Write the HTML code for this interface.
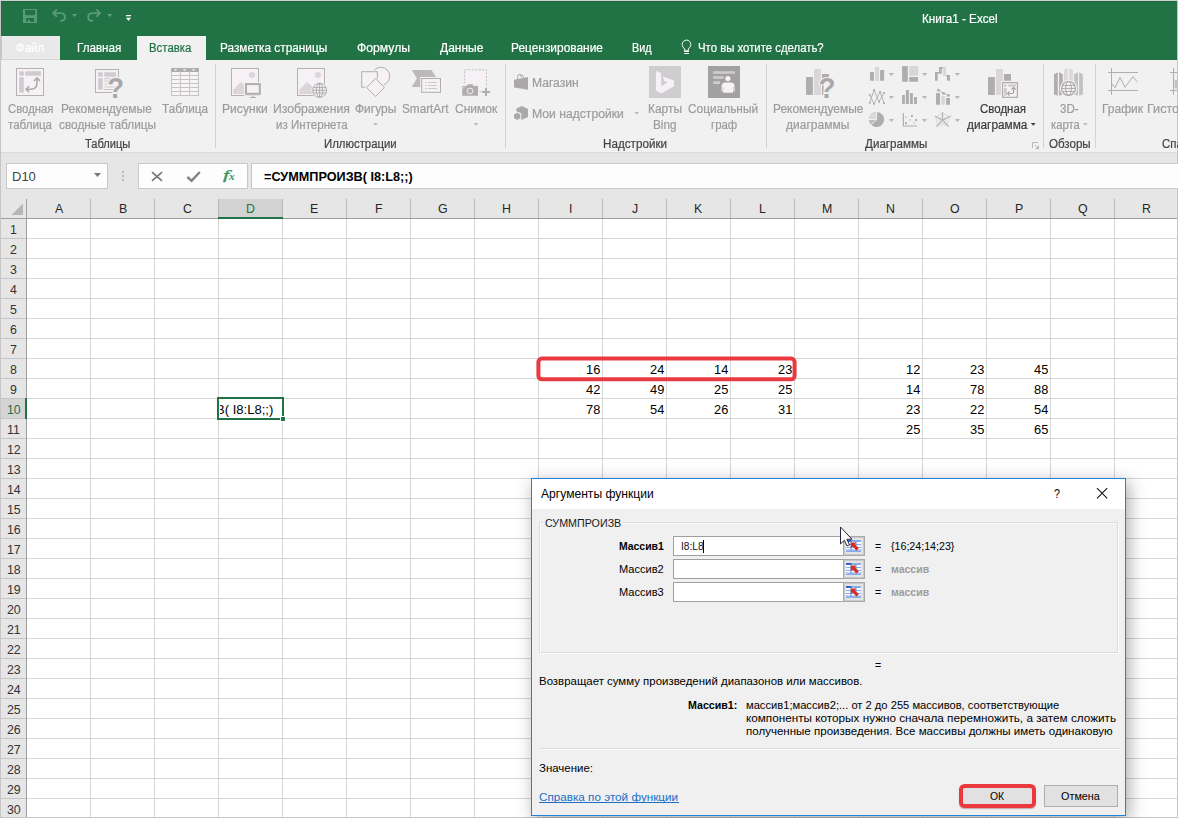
<!DOCTYPE html>
<html lang="ru">
<head>
<meta charset="utf-8">
<title>Книга1 - Excel</title>
<style>
*{box-sizing:border-box;margin:0;padding:0}
html,body{width:1178px;height:818px;overflow:hidden;background:#fff}
body{position:relative;font-family:"Liberation Sans",sans-serif;font-size:12px;color:#444}
.a{position:absolute}
.t{position:absolute;white-space:pre;line-height:1;transform-origin:0 0;display:block}
#win{position:absolute;left:0;top:0;width:1178px;height:818px;background:#c8c5c6;overflow:hidden}
#title{left:1px;top:1px;width:1176px;height:59px;background:#217346;box-shadow:inset 0 1px 0 #1c6b3f}
#filetab{left:1px;top:36px;width:59px;height:24px;background:#e9e9e9;border-left:1px solid #c9c9c9;border-bottom:1px solid #d4d4d4}
#acttab{left:137px;top:36px;width:69px;height:24px;background:#f1f1f1}
#ribbon{left:1px;top:60px;width:1176px;height:92px;background:#f1f1f1}
#ribline{left:1px;top:152px;width:1176px;height:1px;background:#dadada}
#band{left:1px;top:153px;width:1176px;height:66px;background:#e6e6e6}
.sep{position:absolute;top:64px;width:1px;height:84px;background:#d2d2d2}
.box{position:absolute;top:163px;height:26px;background:#fdfdfd;border:1px solid #c9c9c9}
#sheet{left:1px;top:219px;width:1176px;height:598px;background:#fff;
 background-image:linear-gradient(to right,#d6d6d6 1px,transparent 1px),linear-gradient(to bottom,#d6d6d6 1px,transparent 1px);
 background-size:64px 20px,64px 20px;background-position:25px 0,0 19px}
#rowhdr{left:1px;top:219px;width:25px;height:598px;background:#e6e6e6;
 background-image:linear-gradient(to bottom,#c4c4c4 1px,transparent 1px);background-size:25px 20px;background-position:0 19px}
#rowline{left:26px;top:199px;width:1px;height:618px;background:#9e9e9e}
#colline{left:1px;top:218px;width:1176px;height:1px;background:#9e9e9e}
#colhdr{left:27px;top:199px;width:1150px;height:19px;
 background-image:linear-gradient(to right,#b8b8b8 1px,transparent 1px);background-size:64px 19px;background-position:63px 0}
#selcol{left:219px;top:199px;width:63px;height:19px;background:#d2d2d2}
#gcol{left:218px;top:217px;width:65px;height:2px;background:#217346}
#selrow{left:1px;top:399px;width:25px;height:19px;background:#d4d4d4}
#grow{left:25px;top:398px;width:2px;height:21px;background:#217346}

#dshadow{left:527px;top:476px;width:608px;height:342px;box-shadow:0 0 0 0 transparent;background:transparent}
#dlg{left:531px;top:478px;width:595px;height:338px;background:#f0f0f0;border:1px solid #1f83dc;box-shadow:3px 4px 16px 0 rgba(0,0,0,.34)}
#din{left:0;top:1px;width:593px;height:335px}
#dlg .a{position:absolute}
#dtitle{left:0;top:-1px;width:593px;height:30px;background:#fff}
#dgroup{left:7px;top:42px;width:579px;height:131px;border:1px solid #dcdcdc;box-shadow:inset 1px 1px 0 #fbfbfb,1px 1px 0 #fbfbfb}
#dgcap{left:11px;top:36px;width:79px;height:14px;background:#f0f0f0}
.din{left:141px;width:172px;height:20px;background:#fff;border:1px solid #a0a0a0;border-right:none}
.dbtn{left:311px;width:22px;height:20px;background:#e4e4e4;border:1px solid #a9a9a9;box-shadow:inset 0 0 0 1px #c9c9c9}
#caret{left:171px;top:60px;width:1px;height:13px;background:#000}
#dsep{left:7px;top:268px;width:581px;height:1px;background:#dadada;box-shadow:0 1px 0 #fafafa}
#okred{left:427.2px;top:303.9px;width:76.4px;height:24.6px;border:4px solid #ea3a40;border-radius:5.5px;box-shadow:0 1px 1px rgba(120,40,40,.35)}
.pbtn{top:305px;height:22px;background:#e1e1e1;border:1px solid #adadad}
#lnk{left:7px;top:322px;width:140px;height:1px;background:#1a6fc4}
.gl{left:0;top:0;width:1178px;height:160px;will-change:transform}
#topb{left:0;top:0;width:1178px;height:1px;background:#d5d0d2}
</style>
</head>
<body>
<div id="win">
<div class="a" id="topb"></div>
<div class="a" id="title"></div>
<div class="a" id="filetab"></div>
<div class="a" id="acttab"></div>
<div class="a" id="ribbon"></div>
<div class="a" id="ribline"></div>
<div class="a" id="band"></div>
<div class="sep" style="left:215px"></div>
<div class="sep" style="left:505px"></div>
<div class="sep" style="left:766px"></div>
<div class="sep" style="left:1043px"></div>
<div class="sep" style="left:1095px"></div>
<div class="box" style="left:6px;width:102px"></div>
<div class="box" style="left:138px;width:110px"></div>
<div class="box" style="left:251px;width:930px"></div>
<div class="a" id="sheet"></div>
<div class="a" id="rowhdr"></div>
<div class="a" id="colhdr"></div>
<div class="a" id="selcol"></div>
<div class="a" id="selrow"></div>
<div class="a" id="rowline"></div>
<div class="a" id="colline"></div>
<div class="a" id="gcol"></div>
<div class="a" id="grow"></div>
<svg class="a" style="left:0;top:0" width="1178" height="818" viewBox="0 0 1178 818">
<!-- QAT -->
<path fill-rule="evenodd" fill="#599a78" d="M23 9h14v14h-14z M25 10.1h10.2v4.2l-1 1h-8.2l-1-1z M26.2 18h8v3.8h-4.2v-1.8h-2v1.8h-1.8z"/>
<g fill="none" stroke="#599a78" stroke-width="1.9" stroke-linejoin="miter">
 <path d="M57 9.4 L53.2 13.1 L57 16.8"/>
 <path d="M53.6 13.1 H60.4 C63.6 13.1 65 15 65 17.2 C65 19.4 63.4 20.9 60.2 20.9"/>
 <path d="M96.2 9.4 L100 13.1 L96.2 16.8"/>
 <path d="M99.6 13.1 H92.8 C89.6 13.1 88.2 15 88.2 17.2 C88.2 19.4 89.8 20.9 93 20.9"/>
</g>
<path d="M72 14h5l-2.5 3z M107.2 14h5l-2.5 3z" fill="#5f9f7e"/>
<path d="M126 15h5v1.2h-5z M126 17.8h5l-2.5 3.2z" fill="#fff"/>
<!-- bulb -->
<g fill="none" stroke="#fff" stroke-width="1">
 <path d="M684.7 50.6 V49 C683 47.3 682.2 46.3 682.2 44.4 A4.3 4.3 0 0 1 690.8 44.4 C690.8 46.3 690 47.3 688.3 49 V50.6"/>
</g>
<path d="M684.2 50.3h4.7v1.6h-4.7z M684.2 53.1h4.7v1h-4.7z" fill="#fff"/>
<!-- formula bar icons -->
<path d="M94 173h7l-3.5 4z" fill="#777"/>
<g fill="#bdbdbd"><rect x="122" y="171" width="2" height="2"/><rect x="122" y="175" width="2" height="2"/><rect x="122" y="179" width="2" height="2"/></g>
<path d="M152 172.2 L162 180.8 M162 172.2 L152 180.8" stroke="#777" stroke-width="1.7" fill="none"/>
<path d="M187.4 177 L191.6 180.8 L199.8 172" stroke="#828282" stroke-width="2.4" fill="none"/>
<!-- select all triangle -->
<path d="M23 203.5 V215 H11.5 Z" fill="#b7b7b7"/>
<!-- active cell -->
<rect x="218" y="398" width="65" height="21" fill="none" stroke="#217346" stroke-width="2"/>
<rect x="280.5" y="416.5" width="5" height="5" fill="#217346" stroke="#fff" stroke-width="1"/>
<!-- red highlight around I8:L8 -->
<rect x="538.4" y="358.6" width="256.2" height="20.7" rx="3.5" fill="none" stroke="#ea3a40" stroke-width="4"/>
<!-- ribbon dropdown arrows -->
<g fill="#bdbdbd">
 <path d="M373 123h5l-2.5 2.7z M473.5 123h5l-2.5 2.7z M634.2 112h5l-2.5 2.7z M1082.8 123h5l-2.5 2.7z"/>
</g>
<path d="M1030.7 123h5l-2.5 2.7z" fill="#444"/>
</svg>
<svg class="a" style="left:0;top:0" width="1178" height="818" viewBox="0 0 1178 818">
<!-- PivotTable -->
<rect x="16.5" y="68.5" width="27" height="27" fill="#f6f1f5" stroke="#b5b1b3"/>
<path d="M19.2 71.2h4.6v4.6h-4.6z M25.3 71.2h15.6v4.6h-15.6z M19.2 77.3h4.6v15.5h-4.6z" fill="#cfcbce"/>
<g fill="none" stroke="#aaa7a9" stroke-width="1.5">
 <path d="M26.2 89.3 H31 C35.5 89.3 37 86 37 82.5 V78"/>
 <path d="M29.2 86.3 L26 89.3 L29.2 92.3"/>
 <path d="M34 81 L37 77.8 L40 81"/>
</g>
<!-- Recommended PivotTables -->
<rect x="95.5" y="69.5" width="23" height="23" fill="#f6f1f5" stroke="#b5b1b3"/>
<path d="M98.1 72.2h4.6v4.6h-4.6z M104.2 72.2h11.7v4.6h-11.7z M98.1 78.3h4.6v11.4h-4.6z" fill="#cfcbce"/>
<path d="M104.2 78.2h11.7v1h-11.7z M104.2 89h11.7v1h-11.7z" fill="#c4c1c3"/>
<path d="M104.2 80.3h6v1.6h-6z M104.2 83.2h6v1.6h-6z M104.2 86.1h11.7v1.6h-11.7z" fill="#ddd9dc"/>
<rect x="117.6" y="79" width="2.4" height="14.6" fill="#f1f1f1"/>
<text x="107.2" y="97.8" font-family="Liberation Sans, sans-serif" font-weight="bold" font-size="29.5" fill="#aaa7a9" stroke="#f1f1f1" stroke-width="2.2" paint-order="stroke" textLength="16.8" lengthAdjust="spacingAndGlyphs">?</text>
<!-- Table -->
<rect x="171" y="68" width="28" height="28" fill="#c6c3c5"/>
<rect x="171" y="68" width="28" height="4" fill="#b0adaf"/>
<path d="M172 72h8v3h-8z M181 72h8v3h-8z M190 72h8v3h-8z M172 76h8v3h-8z M181 76h8v3h-8z M190 76h8v3h-8z M172 80h8v3h-8z M181 80h8v3h-8z M190 80h8v3h-8z M172 84h8v3h-8z M181 84h8v3h-8z M190 84h8v3h-8z M172 88h8v3h-8z M181 88h8v3h-8z M190 88h8v3h-8z M172 92h8v3h-8z M181 92h8v3h-8z M190 92h8v3h-8z" fill="#f8f3f7"/>
<path d="M173.8 69.3h3.4l-1.7 1.8z M182.8 69.3h3.4l-1.7 1.8z M191.8 69.3h3.4l-1.7 1.8z" fill="#f8f3f7"/>
<!-- Pictures -->
<rect x="231.5" y="68.5" width="27" height="27" fill="#f6f1f5" stroke="#b5b1b3"/>
<circle cx="252" cy="75" r="3" fill="#dcd6da"/>
<path d="M233.3 94 V89.8 L240 82.8 Q241 82 242 82.8 L246 86.5 V94 Z" fill="#dcd6da"/>
<rect x="244" y="82.2" width="18" height="13.6" fill="#f1f1f1"/>
<rect x="246" y="84.1" width="13.8" height="9.7" fill="#f6f1f5" stroke="#b0adaf" stroke-width="2"/>
<path d="M252.4 95.6h1.2v1.4h-1.2z M250 97h5.8v1h-5.8z" fill="#b0adaf"/>
<!-- Online pictures -->
<rect x="297.5" y="68.5" width="27" height="27" fill="#f6f1f5" stroke="#b5b1b3"/>
<circle cx="318" cy="75" r="3" fill="#dcd6da"/>
<path d="M299.2 94 V89.8 L306 82.8 Q307 82 308 82.8 L313 87.5 V94 Z" fill="#dcd6da"/>
<circle cx="319.6" cy="90.3" r="8.2" fill="#f1f1f1"/>
<g fill="#f6f1f5" stroke="#b0adaf" stroke-width="1">
 <circle cx="319.6" cy="90.3" r="7"/>
 <ellipse cx="319.6" cy="90.3" rx="3.2" ry="7" fill="none"/>
 <path d="M319.6 83.3v14 M313.2 87.6h12.8 M312.6 90.3h14 M313.2 93h12.8" fill="none"/>
</g>
<!-- Shapes -->
<path d="M376 69.2 A9 9 0 1 1 384.6 84.5" fill="#f6f1f5" stroke="none"/>
<circle cx="380.8" cy="76.3" r="9" fill="#f6f1f5" stroke="#b0adaf"/>
<rect x="360.2" y="70.2" width="18.6" height="18.4" fill="#f1f1f1"/>
<rect x="361.7" y="71.7" width="15.6" height="15.5" fill="#f6f1f5" stroke="#b0adaf"/>
<path d="M375.5 76.7 L386.3 87.5 L375.5 98.3 L364.7 87.5 Z" fill="#f1f1f1"/>
<path d="M375.5 78.6 L384.4 87.5 L375.5 96.4 L366.6 87.5 Z" fill="#f6f1f5" stroke="#b0adaf"/>
<!-- SmartArt -->
<path d="M411.7 70 H431.5 L437 78.5 L431.5 87 H411.7 L416.9 78.5 Z" fill="#bcb9bb"/>
<rect x="420.2" y="77" width="21.8" height="16.8" fill="#f1f1f1"/>
<rect x="421.7" y="78.5" width="18.8" height="13.8" fill="#f6f1f5" stroke="#b0adaf"/>
<path d="M425 82h1.8v1h-1.8z M428 82h8.8v1h-8.8z M425 85h1.8v1h-1.8z M428 85h8.8v1h-8.8z M425 88h1.8v1h-1.8z M428 88h8.8v1h-8.8z" fill="#cbc8ca"/>
<!-- Screenshot -->
<rect x="464.7" y="69.8" width="21.8" height="17.5" fill="#f6f1f5"/>
<path d="M464.7 87.3 V69.8 H486.5 V87.3" fill="none" stroke="#c2bfc1" stroke-dasharray="2.2 1.3"/>
<rect x="461.4" y="83.4" width="17.6" height="13" fill="#f1f1f1"/>
<path d="M462.2 86h4.6l.9-1.8h4.8l.9 1.8h4.6v9.8h-15.8z" fill="#b0adaf"/>
<circle cx="470" cy="91" r="2.9" fill="#b0adaf" stroke="#f3eef2" stroke-width="1"/>
<rect x="463.2" y="87.1" width="1.2" height="1.2" fill="#f6f1f5"/>
<path d="M485 88h2v3h3v2h-3v3h-2v-3h-3v-2h3z" fill="#b0adaf"/>
<path d="M479.6 91.5h1.6" stroke="#c2bfc1" fill="none"/>
<!-- Store -->
<path d="M514 79.8 L528 77 V89.7 L514 87.6 Z" fill="#aba8aa"/>
<path d="M517.6 79 V76.6 Q517.6 74.4 519.6 74.4 Q521.4 74.4 521.4 76.4 V77.6 M519.8 76 Q520.6 74.6 522 75 Q523.6 75.4 523.6 77.6" fill="none" stroke="#aba8aa" stroke-width="1"/>
<!-- My add-ins -->
<path d="M522 106 L528 109 V117 L521.3 120 V113.3 L516.4 111.3 V108.6 Z" fill="#aba8aa"/>
<path d="M517.2 112.8 L520.3 114.6 V118.2 L517.2 120 L514.1 118.2 V114.6 Z" fill="#aba8aa"/>
<!-- Bing -->
<rect x="649" y="66" width="32" height="32" fill="#cfcdcf"/>
<path d="M656 71 L661.1 72.8 V86.3 L667.6 82.6 L664.4 81.1 L662.6 76.4 L674 80.5 V86.2 L661.1 93.6 L656 90.6 Z" fill="#f6f1f5"/>
<!-- Social graph -->
<rect x="708" y="66" width="32" height="32" fill="#a3a0a2"/>
<path d="M713.1 71.2h21.9v2.5h-21.9z M713.1 76.3h10.6v2.5h-10.6z M713.1 81.3h6.9v2.6h-6.9z" fill="#cfcdcf" />
<circle cx="727.9" cy="78.5" r="2.6" fill="#f6f1f5"/>
<path d="M721.6 91.5 V86.5 Q721.6 82.6 725.5 82.6 H730.6 Q734.6 82.6 734.6 86.5 V91.5 H733.4 V87 H733 V92.8 H723.2 V87 H722.8 V91.5 Z" fill="#f6f1f5"/>
<!-- Recommended charts -->
<path d="M806 77h6.9v17.9h-6.9z" fill="#b0adaf"/>
<path d="M814.1 69h6.8v25.9h-6.8z" fill="#d9d5d8"/>
<path d="M822 74.1h6.9v6h-6.9z M822 84h1.6v10.9h-1.6z" fill="#b0adaf"/>
<text x="818.6" y="97.8" font-family="Liberation Sans, sans-serif" font-weight="bold" font-size="29.5" fill="#aaa7a9" stroke="#f1f1f1" stroke-width="2.2" paint-order="stroke" textLength="17" lengthAdjust="spacingAndGlyphs">?</text>
<!-- small charts row1 -->
<path d="M870 72h4v8.8h-4z M880.1 70h4v10.8h-4z" fill="#b0adaf"/>
<path d="M875.1 67h3.9v13.8h-3.9z" fill="#d9d5d8"/>
<path d="M902.1 66h5.7v15.8h-5.7z M909.2 77.1h8.9v4.7h-8.9z" fill="#b0adaf"/>
<path d="M909.2 66h8.9v9.7h-8.9z" fill="#d9d5d8"/>
<path d="M935 72.1h2.7v8.7h-2.7z M935 72.1h6.8v1.6h-6.8z M939.1 67.1h2.7v6.6h-2.7z M939.1 67.1h4v1.5h-4z M946 75h4v1.6h-4z M947 75h3v5.8h-3z" fill="#b0adaf"/>
<path d="M943.1 67.1h2.9v8.6h-2.9z" fill="#d9d5d8"/>
<!-- small charts row2 -->
<g fill="none" stroke="#b0adaf" stroke-width="0.9">
 <path d="M869.8 94.9 L874 103.9 L880 91.9 L884.1 103"/>
 <path d="M869.8 102.9 L874 89.8 L879 101.8 L884.1 92.8"/>
</g>
<path d="M868.9 94h1.8v1.8h-1.8z M873.1 103h1.8v1.8h-1.8z M879.1 91h1.8v1.8h-1.8z M883.2 102.1h1.8v1.8h-1.8z M868.9 102h1.8v1.8h-1.8z M873.1 88.9h1.8v1.8h-1.8z M878.1 100.9h1.8v1.8h-1.8z M883.2 91.9h1.8v1.8h-1.8z" fill="#b0adaf"/>
<path d="M902.1 95.1h2.8v8.8h-2.8z M905.9 90h3v13.9h-3z M910 93h2.9v10.9h-2.9z M914 97h3v6.9h-3z" fill="#b0adaf"/>
<path d="M936 93h4v11.8h-4z M946.1 97.9h3.9v6.9h-3.9z" fill="#b0adaf"/>
<path d="M941.2 96h3.6v8.8h-3.6z" fill="#d9d5d8"/>
<path d="M938.4 90.2 L943.6 93.4 L948.5 95.4" fill="none" stroke="#b0adaf" stroke-width="0.9"/>
<circle cx="938.4" cy="90.2" r="1.4" fill="#b0adaf"/><circle cx="943.6" cy="93.4" r="1.4" fill="#b0adaf"/><circle cx="948.5" cy="95.4" r="1.4" fill="#b0adaf"/>
<!-- small charts row3 -->
<circle cx="876.6" cy="119.5" r="7.6" fill="#b0adaf"/>
<path d="M876.6 119.5 V111.9 A7.6 7.6 0 0 0 869 119.5 Z" fill="#dcd8db"/>
<path d="M876.6 119.5 H869 A7.6 7.6 0 0 0 871.2 124.9 Z" fill="#bebbbd"/>
<path d="M876.6 111.9 V119.5 H869 M876.6 119.5 L871.2 124.9" fill="none" stroke="#f1f1f1" stroke-width="1"/>
<path d="M903.4 113.1 V126 H917" fill="none" stroke="#b0adaf" stroke-width="1.2"/>
<path d="M911 115h1.9v1.9h-1.9z M915.1 119.1h1.9v1.9h-1.9z M905 122h1.9v1.9h-1.9z" fill="#b0adaf"/>
<path d="M905 116h1.9v1.9h-1.9z M909.1 119.1h1.9v1.9h-1.9z M913.1 122h1.9v1.9h-1.9z" fill="#dcd6da"/>
<g fill="none" stroke="#d9d5d8" stroke-width="0.9">
 <path d="M942.5 113.4 L949.2 117 L947.4 125 H937.6 L935.8 117 Z"/>
 <path d="M942.5 116.6 L946 118.6 L945 123 H940 L939 118.6 Z"/>
</g>
<path d="M942.5 120.2 V112 M942.5 120.2 L950.8 116.1 M942.5 120.2 L948.7 126.6 M942.5 120.2 L936.3 126.6 M942.5 120.2 L935 116.1" fill="none" stroke="#b4b1b3" stroke-width="1.1"/>
<g fill="#b9b6b8">
 <path d="M888.8 73h5.2l-2.6 2.9z M921.9 73h5.2l-2.6 2.9z M954.8 73h5.2l-2.6 2.9z"/>
 <path d="M888.8 96h5.2l-2.6 2.9z M921.9 96h5.2l-2.6 2.9z M954.8 96h5.2l-2.6 2.9z"/>
 <path d="M888.8 119h5.2l-2.6 2.9z M921.9 119h5.2l-2.6 2.9z M954.8 119h5.2l-2.6 2.9z"/>
</g>
<!-- Pivot chart -->
<path d="M988 77h6.9v17.9h-6.9z M1004 74.1h7v6.7h-7z" fill="#b0adaf"/>
<path d="M996 69h6.9v25.9h-6.9z" fill="#d9d5d8"/>
<rect x="1001" y="81" width="18" height="18" fill="#f1f1f1"/>
<rect x="1002.6" y="82.6" width="14.8" height="14.7" fill="#f8f3f7" stroke="#adaaac" stroke-width="1.2"/>
<path d="M1004 84.2h2.8v2.5h-2.8z M1008.2 84.2h7.7v2.5h-7.7z M1004 88.1h2.8v7.6h-2.8z" fill="#cfcbce"/>
<g fill="none" stroke="#a5a2a4" stroke-width="1.2">
 <path d="M1007.6 93.5 H1012.4 Q1013.6 93.5 1013.6 92.3 V87.6"/>
 <path d="M1009.6 91.4 L1007.5 93.5 L1009.6 95.6 M1011.4 89.6 L1013.6 87.4 L1015.8 89.6"/>
</g>
<!-- 3D map -->
<path d="M1054 74.2 L1057.8 72.2 V95.7 L1054 94.6 Z M1059.1 72.2 L1062.8 74.2 V94.6 L1059.1 95.7 Z" fill="#b0adaf"/>
<path d="M1064 70.2 L1067.8 68.1 V90 H1064 Z M1069.1 68.1 L1072.9 70.2 V90 H1069.1 Z" fill="#dcd8db"/>
<path d="M1074.1 74.2 L1078 72.2 V95.7 L1074.1 94.6 Z M1079.1 72.2 L1082.9 74.2 V94.6 L1079.1 95.7 Z" fill="#c4c1c3"/>
<circle cx="1068.5" cy="88.4" r="8.6" fill="#f1f1f1"/>
<g fill="#f8f3f7" stroke="#a9a6a8" stroke-width="1.2">
 <circle cx="1068.5" cy="88.4" r="6.9"/>
 <ellipse cx="1068.5" cy="88.4" rx="2.8" ry="6.9" fill="none" stroke-width="1"/>
 <path d="M1061.6 88.4h13.8 M1062.6 85.4h11.8 M1062.6 91.4h11.8" fill="none" stroke-width="1"/>
</g>
<!-- Sparkline line -->
<g fill="none" stroke="#b0adaf" stroke-width="1">
 <path d="M1111.5 68 V94.8 M1108 72.5 H1138 M1108 90.5 H1138"/>
 <path d="M1112 83.8 L1115 87.6 L1120 77.4 L1125 87.2 L1133 76.6 L1137 81.8"/>
 <path d="M1173.5 68 V94.8 M1170 72.5 H1177 M1170 90.5 H1177"/>
</g>
<path d="M1174.6 80h2.4v8.5h-2.4z" fill="#c4c1c3"/>
<!-- dialog launcher -->
<path d="M1032.5 148 V142.5 H1038" fill="none" stroke="#b9b9b9" stroke-width="1"/>
<path d="M1035 145 L1038.5 148.5 M1038.5 145.6 V148.5 H1035.6" fill="none" stroke="#b0b0b0" stroke-width="1"/>
</svg>

<div class="a" id="dshadow"></div>
<div class="a" id="dlg"><div class="a" id="din">
 <div class="a" id="dtitle"></div>
 <div class="a" id="dgroup"></div>
 <div class="a" id="dgcap"></div>
 <div class="a din" style="top:56px"></div>
 <div class="a din" style="top:79px"></div>
 <div class="a din" style="top:102px"></div>
 <div class="a dbtn" style="top:56px"></div>
 <div class="a dbtn" style="top:79px"></div>
 <div class="a dbtn" style="top:102px"></div>
 <div class="a" id="caret"></div>
 <div class="a" id="dsep"></div>
 <div class="a pbtn" style="left:430px;width:72px;top:306px;height:20px"></div>
 <div class="a pbtn" style="left:512px;width:74px"></div>
 <div class="a" id="okred"></div>
 <div class="a" id="lnk"></div>
</div></div>
<svg class="a" style="left:0;top:0" width="1178" height="818" viewBox="0 0 1178 818">
<path d="M1097 488.2 L1107.2 498.4 M1107.2 488.2 L1097 498.4" stroke="#111" stroke-width="1.1" fill="none"/>

<g transform="translate(846 540)">
 <rect x="0" y="0" width="15" height="12" fill="#fff"/>
 <rect x="0" y="0" width="15" height="2" fill="#86adea"/>
 <rect x="0" y="0" width="5.4" height="1.8" fill="#2c5cc0"/>
 <path d="M0 4.6h15 M0 7.4h15 M0 10h15" stroke="#7da4e6" stroke-width="1" fill="none"/>
 <path d="M5 2v10 M10 2v10" stroke="#5f8edc" stroke-width="1" fill="none"/>
 <rect x="0" y="10.4" width="15" height="1.6" fill="#86adea"/>
 <path d="M4.8 2.6 L10.4 2.6 L8.8 4.2 L12.8 8.2 L10.6 10.4 L6.6 6.4 L4.8 8.2 Z" fill="#dc2a1e"/>
</g>
<g transform="translate(846 563)">
 <rect x="0" y="0" width="15" height="12" fill="#fff"/>
 <rect x="0" y="0" width="15" height="2" fill="#86adea"/>
 <rect x="0" y="0" width="5.4" height="1.8" fill="#2c5cc0"/>
 <path d="M0 4.6h15 M0 7.4h15 M0 10h15" stroke="#7da4e6" stroke-width="1" fill="none"/>
 <path d="M5 2v10 M10 2v10" stroke="#5f8edc" stroke-width="1" fill="none"/>
 <rect x="0" y="10.4" width="15" height="1.6" fill="#86adea"/>
 <path d="M4.8 2.6 L10.4 2.6 L8.8 4.2 L12.8 8.2 L10.6 10.4 L6.6 6.4 L4.8 8.2 Z" fill="#dc2a1e"/>
</g>
<g transform="translate(846 586)">
 <rect x="0" y="0" width="15" height="12" fill="#fff"/>
 <rect x="0" y="0" width="15" height="2" fill="#86adea"/>
 <rect x="0" y="0" width="5.4" height="1.8" fill="#2c5cc0"/>
 <path d="M0 4.6h15 M0 7.4h15 M0 10h15" stroke="#7da4e6" stroke-width="1" fill="none"/>
 <path d="M5 2v10 M10 2v10" stroke="#5f8edc" stroke-width="1" fill="none"/>
 <rect x="0" y="10.4" width="15" height="1.6" fill="#86adea"/>
 <path d="M4.8 2.6 L10.4 2.6 L8.8 4.2 L12.8 8.2 L10.6 10.4 L6.6 6.4 L4.8 8.2 Z" fill="#dc2a1e"/>
</g>
<path d="M840.5 527 V543.9 L844.4 540.3 L847 545.9 L849.5 544.8 L846.9 539.3 L851.9 539.2 Z" fill="#fff" stroke="#1a1a2e" stroke-width="0.95" stroke-linejoin="round"/>
</svg>

<div class="a gl">
<span class="t" style="left:921.67px;top:12px;line-height:14px;font-size:12.5px;color:#ffffff;transform:scaleX(0.9337);-webkit-text-stroke:0.22px #ffffff;">Книга1 - Excel</span>
<span class="t" style="left:16.30px;top:41px;line-height:14px;font-size:12.5px;color:#ffffff;transform:scaleX(0.9133);-webkit-text-stroke:0.22px #ffffff;">Файл</span>
<span class="t" style="left:76.77px;top:41px;line-height:14px;font-size:12.5px;color:#ffffff;transform:scaleX(0.9321);-webkit-text-stroke:0.22px #ffffff;">Главная</span>
<span class="t" style="left:149.49px;top:41px;line-height:14px;font-size:12.5px;color:#217346;transform:scaleX(0.9119);-webkit-text-stroke:0.22px #217346;">Вставка</span>
<span class="t" style="left:220.45px;top:41px;line-height:14px;font-size:12.5px;color:#ffffff;transform:scaleX(0.9456);-webkit-text-stroke:0.22px #ffffff;">Разметка страницы</span>
<span class="t" style="left:357.20px;top:41px;line-height:14px;font-size:12.5px;color:#ffffff;transform:scaleX(0.9741);-webkit-text-stroke:0.22px #ffffff;">Формулы</span>
<span class="t" style="left:439.70px;top:41px;line-height:14px;font-size:12.5px;color:#ffffff;transform:scaleX(0.9622);-webkit-text-stroke:0.22px #ffffff;">Данные</span>
<span class="t" style="left:511.05px;top:41px;line-height:14px;font-size:12.5px;color:#ffffff;transform:scaleX(0.9522);-webkit-text-stroke:0.22px #ffffff;">Рецензирование</span>
<span class="t" style="left:631.73px;top:41px;line-height:14px;font-size:12.5px;color:#ffffff;transform:scaleX(0.8692);-webkit-text-stroke:0.22px #ffffff;">Вид</span>
<span class="t" style="left:698.10px;top:41px;line-height:14px;font-size:12.5px;color:#ffffff;transform:scaleX(0.9093);-webkit-text-stroke:0.22px #ffffff;">Что вы хотите сделать?</span>
<span class="t" style="left:7.70px;top:102px;line-height:14px;font-size:12.5px;color:#9c9c9c;transform:scaleX(0.9077);-webkit-text-stroke:0.22px #9c9c9c;">Сводная</span>
<span class="t" style="left:8.40px;top:118px;line-height:14px;font-size:12.5px;color:#9c9c9c;transform:scaleX(0.9271);-webkit-text-stroke:0.22px #9c9c9c;">таблица</span>
<span class="t" style="left:61.24px;top:102px;line-height:14px;font-size:12.5px;color:#9c9c9c;transform:scaleX(0.9607);-webkit-text-stroke:0.22px #9c9c9c;">Рекомендуемые</span>
<span class="t" style="left:58.50px;top:118px;line-height:14px;font-size:12.5px;color:#9c9c9c;transform:scaleX(0.9464);-webkit-text-stroke:0.22px #9c9c9c;">сводные таблицы</span>
<span class="t" style="left:161.70px;top:102px;line-height:14px;font-size:12.5px;color:#9c9c9c;transform:scaleX(0.9376);-webkit-text-stroke:0.22px #9c9c9c;">Таблица</span>
<span class="t" style="left:85.40px;top:137px;line-height:14px;font-size:12.5px;color:#444444;transform:scaleX(0.8872);-webkit-text-stroke:0.22px #444444;">Таблицы</span>
<span class="t" style="left:221.73px;top:102px;line-height:14px;font-size:12.5px;color:#9c9c9c;transform:scaleX(0.9699);-webkit-text-stroke:0.22px #9c9c9c;">Рисунки</span>
<span class="t" style="left:272.72px;top:102px;line-height:14px;font-size:12.5px;color:#9c9c9c;transform:scaleX(0.9780);-webkit-text-stroke:0.22px #9c9c9c;">Изображения</span>
<span class="t" style="left:275.70px;top:118px;line-height:14px;font-size:12.5px;color:#9c9c9c;transform:scaleX(0.9254);-webkit-text-stroke:0.22px #9c9c9c;">из Интернета</span>
<span class="t" style="left:354.60px;top:102px;line-height:14px;font-size:12.5px;color:#9c9c9c;transform:scaleX(0.9581);-webkit-text-stroke:0.22px #9c9c9c;">Фигуры</span>
<span class="t" style="left:402.00px;top:102px;line-height:14px;font-size:12.5px;color:#9c9c9c;transform:scaleX(0.9411);-webkit-text-stroke:0.22px #9c9c9c;">SmartArt</span>
<span class="t" style="left:455.00px;top:102px;line-height:14px;font-size:12.5px;color:#9c9c9c;transform:scaleX(0.9627);-webkit-text-stroke:0.22px #9c9c9c;">Снимок</span>
<span class="t" style="left:323.69px;top:137px;line-height:14px;font-size:12.5px;color:#444444;transform:scaleX(0.9092);-webkit-text-stroke:0.22px #444444;">Иллюстрации</span>
<span class="t" style="left:531.63px;top:76px;line-height:14px;font-size:12.5px;color:#9c9c9c;transform:scaleX(0.9680);-webkit-text-stroke:0.22px #9c9c9c;">Магазин</span>
<span class="t" style="left:531.63px;top:107px;line-height:14px;font-size:12.5px;color:#9c9c9c;transform:scaleX(0.9728);-webkit-text-stroke:0.22px #9c9c9c;">Мои надстройки</span>
<span class="t" style="left:647.54px;top:102px;line-height:14px;font-size:12.5px;color:#9c9c9c;transform:scaleX(0.9557);-webkit-text-stroke:0.22px #9c9c9c;">Карты</span>
<span class="t" style="left:652.66px;top:118px;line-height:14px;font-size:12.5px;color:#9c9c9c;transform:scaleX(0.9391);-webkit-text-stroke:0.22px #9c9c9c;">Bing</span>
<span class="t" style="left:688.40px;top:102px;line-height:14px;font-size:12.5px;color:#9c9c9c;transform:scaleX(0.9503);-webkit-text-stroke:0.22px #9c9c9c;">Социальный</span>
<span class="t" style="left:710.80px;top:118px;line-height:14px;font-size:12.5px;color:#9c9c9c;transform:scaleX(0.9135);-webkit-text-stroke:0.22px #9c9c9c;">граф</span>
<span class="t" style="left:603.47px;top:137px;line-height:14px;font-size:12.5px;color:#444444;transform:scaleX(0.9349);-webkit-text-stroke:0.22px #444444;">Надстройки</span>
<span class="t" style="left:772.54px;top:102px;line-height:14px;font-size:12.5px;color:#9c9c9c;transform:scaleX(0.9553);-webkit-text-stroke:0.22px #9c9c9c;">Рекомендуемые</span>
<span class="t" style="left:786.20px;top:118px;line-height:14px;font-size:12.5px;color:#9c9c9c;transform:scaleX(0.9624);-webkit-text-stroke:0.22px #9c9c9c;">диаграммы</span>
<span class="t" style="left:979.50px;top:102px;line-height:14px;font-size:12.5px;color:#3a3a3a;transform:scaleX(0.9179);-webkit-text-stroke:0.22px #3a3a3a;">Сводная</span>
<span class="t" style="left:967.00px;top:118px;line-height:14px;font-size:12.5px;color:#3a3a3a;transform:scaleX(0.9455);-webkit-text-stroke:0.22px #3a3a3a;">диаграмма</span>
<span class="t" style="left:865.20px;top:137px;line-height:14px;font-size:12.5px;color:#444444;transform:scaleX(0.9306);-webkit-text-stroke:0.22px #444444;">Диаграммы</span>
<span class="t" style="left:1059.80px;top:102px;line-height:14px;font-size:12.5px;color:#9c9c9c;transform:scaleX(0.9260);-webkit-text-stroke:0.22px #9c9c9c;">3D-</span>
<span class="t" style="left:1050.70px;top:118px;line-height:14px;font-size:12.5px;color:#9c9c9c;transform:scaleX(0.9043);-webkit-text-stroke:0.22px #9c9c9c;">карта</span>
<span class="t" style="left:1048.80px;top:137px;line-height:14px;font-size:12.5px;color:#444444;transform:scaleX(0.9223);-webkit-text-stroke:0.22px #444444;">Обзоры</span>
<span class="t" style="left:1101.54px;top:102px;line-height:14px;font-size:12.5px;color:#9c9c9c;transform:scaleX(0.9589);-webkit-text-stroke:0.22px #9c9c9c;">График</span>
<span class="t" style="left:1147.29px;top:102px;line-height:14px;font-size:12.5px;color:#9c9c9c;transform:scaleX(1.0070);-webkit-text-stroke:0.22px #9c9c9c;">Гистограмма</span>
<span class="t" style="left:1161.70px;top:137px;line-height:14px;font-size:12.5px;color:#444444;transform:scaleX(0.9111);-webkit-text-stroke:0.22px #444444;">Спарклайны</span>
</div>
<span class="t" style="left:12.20px;top:169px;line-height:15px;font-size:13px;color:#444444;transform:scaleX(0.9992);">D10</span>
<span class="t" style="left:263.70px;top:169px;line-height:15px;font-size:13px;color:#000;transform:scaleX(0.9736);font-weight:bold;">=СУММПРОИЗВ( I8:L8;;)</span>
<span class="t" style="left:54.73px;top:201px;line-height:15px;font-size:13px;color:#262626;transform:scaleX(0.9500);">A</span>
<span class="t" style="left:118.72px;top:201px;line-height:15px;font-size:13px;color:#262626;transform:scaleX(0.9500);">B</span>
<span class="t" style="left:182.72px;top:201px;line-height:15px;font-size:13px;color:#262626;transform:scaleX(0.9500);">C</span>
<span class="t" style="left:246.25px;top:201px;line-height:15px;font-size:13px;color:#217346;transform:scaleX(0.9500);">D</span>
<span class="t" style="left:310.25px;top:201px;line-height:15px;font-size:13px;color:#262626;transform:scaleX(0.9500);">E</span>
<span class="t" style="left:374.73px;top:201px;line-height:15px;font-size:13px;color:#262626;transform:scaleX(0.9500);">F</span>
<span class="t" style="left:438.25px;top:201px;line-height:15px;font-size:13px;color:#262626;transform:scaleX(0.9500);">G</span>
<span class="t" style="left:502.25px;top:201px;line-height:15px;font-size:13px;color:#262626;transform:scaleX(0.9500);">H</span>
<span class="t" style="left:569.10px;top:201px;line-height:15px;font-size:13px;color:#262626;transform:scaleX(0.9500);">I</span>
<span class="t" style="left:632.15px;top:201px;line-height:15px;font-size:13px;color:#262626;transform:scaleX(0.9500);">J</span>
<span class="t" style="left:694.25px;top:201px;line-height:15px;font-size:13px;color:#262626;transform:scaleX(0.9500);">K</span>
<span class="t" style="left:759.20px;top:201px;line-height:15px;font-size:13px;color:#262626;transform:scaleX(0.9500);">L</span>
<span class="t" style="left:821.77px;top:201px;line-height:15px;font-size:13px;color:#262626;transform:scaleX(0.9500);">M</span>
<span class="t" style="left:886.25px;top:201px;line-height:15px;font-size:13px;color:#262626;transform:scaleX(0.9500);">N</span>
<span class="t" style="left:950.25px;top:201px;line-height:15px;font-size:13px;color:#262626;transform:scaleX(0.9500);">O</span>
<span class="t" style="left:1014.72px;top:201px;line-height:15px;font-size:13px;color:#262626;transform:scaleX(0.9500);">P</span>
<span class="t" style="left:1078.25px;top:201px;line-height:15px;font-size:13px;color:#262626;transform:scaleX(0.9500);">Q</span>
<span class="t" style="left:1142.25px;top:201px;line-height:15px;font-size:13px;color:#262626;transform:scaleX(0.9500);">R</span>
<span class="t" style="left:10.28px;top:222px;line-height:15px;font-size:13px;color:#333;transform:scaleX(0.9500);">1</span>
<span class="t" style="left:10.28px;top:242px;line-height:15px;font-size:13px;color:#333;transform:scaleX(0.9500);">2</span>
<span class="t" style="left:10.28px;top:262px;line-height:15px;font-size:13px;color:#333;transform:scaleX(0.9500);">3</span>
<span class="t" style="left:10.28px;top:282px;line-height:15px;font-size:13px;color:#333;transform:scaleX(0.9500);">4</span>
<span class="t" style="left:10.28px;top:302px;line-height:15px;font-size:13px;color:#333;transform:scaleX(0.9500);">5</span>
<span class="t" style="left:10.28px;top:322px;line-height:15px;font-size:13px;color:#333;transform:scaleX(0.9500);">6</span>
<span class="t" style="left:10.28px;top:342px;line-height:15px;font-size:13px;color:#333;transform:scaleX(0.9500);">7</span>
<span class="t" style="left:10.28px;top:362px;line-height:15px;font-size:13px;color:#333;transform:scaleX(0.9500);">8</span>
<span class="t" style="left:10.28px;top:382px;line-height:15px;font-size:13px;color:#333;transform:scaleX(0.9500);">9</span>
<span class="t" style="left:6.84px;top:402px;line-height:15px;font-size:13px;color:#217346;transform:scaleX(0.9500);">10</span>
<span class="t" style="left:7.30px;top:422px;line-height:15px;font-size:13px;color:#333;transform:scaleX(0.9500);">11</span>
<span class="t" style="left:6.84px;top:442px;line-height:15px;font-size:13px;color:#333;transform:scaleX(0.9500);">12</span>
<span class="t" style="left:6.84px;top:462px;line-height:15px;font-size:13px;color:#333;transform:scaleX(0.9500);">13</span>
<span class="t" style="left:6.84px;top:482px;line-height:15px;font-size:13px;color:#333;transform:scaleX(0.9500);">14</span>
<span class="t" style="left:6.84px;top:502px;line-height:15px;font-size:13px;color:#333;transform:scaleX(0.9500);">15</span>
<span class="t" style="left:6.84px;top:522px;line-height:15px;font-size:13px;color:#333;transform:scaleX(0.9500);">16</span>
<span class="t" style="left:6.84px;top:542px;line-height:15px;font-size:13px;color:#333;transform:scaleX(0.9500);">17</span>
<span class="t" style="left:6.84px;top:562px;line-height:15px;font-size:13px;color:#333;transform:scaleX(0.9500);">18</span>
<span class="t" style="left:6.84px;top:582px;line-height:15px;font-size:13px;color:#333;transform:scaleX(0.9500);">19</span>
<span class="t" style="left:6.84px;top:602px;line-height:15px;font-size:13px;color:#333;transform:scaleX(0.9500);">20</span>
<span class="t" style="left:6.84px;top:622px;line-height:15px;font-size:13px;color:#333;transform:scaleX(0.9500);">21</span>
<span class="t" style="left:6.84px;top:642px;line-height:15px;font-size:13px;color:#333;transform:scaleX(0.9500);">22</span>
<span class="t" style="left:6.84px;top:662px;line-height:15px;font-size:13px;color:#333;transform:scaleX(0.9500);">23</span>
<span class="t" style="left:6.84px;top:682px;line-height:15px;font-size:13px;color:#333;transform:scaleX(0.9500);">24</span>
<span class="t" style="left:6.84px;top:702px;line-height:15px;font-size:13px;color:#333;transform:scaleX(0.9500);">25</span>
<span class="t" style="left:6.84px;top:722px;line-height:15px;font-size:13px;color:#333;transform:scaleX(0.9500);">26</span>
<span class="t" style="left:6.84px;top:742px;line-height:15px;font-size:13px;color:#333;transform:scaleX(0.9500);">27</span>
<span class="t" style="left:6.84px;top:762px;line-height:15px;font-size:13px;color:#333;transform:scaleX(0.9500);">28</span>
<span class="t" style="left:6.84px;top:782px;line-height:15px;font-size:13px;color:#333;transform:scaleX(0.9500);">29</span>
<span class="t" style="left:6.84px;top:802px;line-height:15px;font-size:13px;color:#333;transform:scaleX(0.9500);">30</span>
<span class="t" style="left:586.23px;top:362px;line-height:15px;font-size:13.5px;color:#000;transform:scaleX(0.9500);">16</span>
<span class="t" style="left:650.23px;top:362px;line-height:15px;font-size:13.5px;color:#000;transform:scaleX(0.9500);">24</span>
<span class="t" style="left:714.23px;top:362px;line-height:15px;font-size:13.5px;color:#000;transform:scaleX(0.9500);">14</span>
<span class="t" style="left:778.23px;top:362px;line-height:15px;font-size:13.5px;color:#000;transform:scaleX(0.9500);">23</span>
<span class="t" style="left:586.23px;top:382px;line-height:15px;font-size:13.5px;color:#000;transform:scaleX(0.9500);">42</span>
<span class="t" style="left:650.23px;top:382px;line-height:15px;font-size:13.5px;color:#000;transform:scaleX(0.9500);">49</span>
<span class="t" style="left:714.23px;top:382px;line-height:15px;font-size:13.5px;color:#000;transform:scaleX(0.9500);">25</span>
<span class="t" style="left:778.23px;top:382px;line-height:15px;font-size:13.5px;color:#000;transform:scaleX(0.9500);">25</span>
<span class="t" style="left:586.23px;top:402px;line-height:15px;font-size:13.5px;color:#000;transform:scaleX(0.9500);">78</span>
<span class="t" style="left:650.23px;top:402px;line-height:15px;font-size:13.5px;color:#000;transform:scaleX(0.9500);">54</span>
<span class="t" style="left:714.23px;top:402px;line-height:15px;font-size:13.5px;color:#000;transform:scaleX(0.9500);">26</span>
<span class="t" style="left:778.23px;top:402px;line-height:15px;font-size:13.5px;color:#000;transform:scaleX(0.9500);">31</span>
<span class="t" style="left:906.23px;top:362px;line-height:15px;font-size:13.5px;color:#000;transform:scaleX(0.9500);">12</span>
<span class="t" style="left:970.23px;top:362px;line-height:15px;font-size:13.5px;color:#000;transform:scaleX(0.9500);">23</span>
<span class="t" style="left:1034.23px;top:362px;line-height:15px;font-size:13.5px;color:#000;transform:scaleX(0.9500);">45</span>
<span class="t" style="left:906.23px;top:382px;line-height:15px;font-size:13.5px;color:#000;transform:scaleX(0.9500);">14</span>
<span class="t" style="left:970.23px;top:382px;line-height:15px;font-size:13.5px;color:#000;transform:scaleX(0.9500);">78</span>
<span class="t" style="left:1034.23px;top:382px;line-height:15px;font-size:13.5px;color:#000;transform:scaleX(0.9500);">88</span>
<span class="t" style="left:906.23px;top:402px;line-height:15px;font-size:13.5px;color:#000;transform:scaleX(0.9500);">23</span>
<span class="t" style="left:970.23px;top:402px;line-height:15px;font-size:13.5px;color:#000;transform:scaleX(0.9500);">22</span>
<span class="t" style="left:1034.23px;top:402px;line-height:15px;font-size:13.5px;color:#000;transform:scaleX(0.9500);">54</span>
<span class="t" style="left:906.23px;top:422px;line-height:15px;font-size:13.5px;color:#000;transform:scaleX(0.9500);">25</span>
<span class="t" style="left:970.23px;top:422px;line-height:15px;font-size:13.5px;color:#000;transform:scaleX(0.9500);">35</span>
<span class="t" style="left:1034.23px;top:422px;line-height:15px;font-size:13.5px;color:#000;transform:scaleX(0.9500);">65</span>
<span class="t" style="left:540.80px;top:487px;line-height:14px;font-size:12.5px;color:#000;transform:scaleX(0.9683);">Аргументы функции</span>
<span class="t" style="left:544.60px;top:517px;line-height:12px;font-size:11px;color:#1a1a1a;transform:scaleX(0.9731);">СУММПРОИЗВ</span>
<span class="t" style="left:618.70px;top:540px;line-height:12px;font-size:11px;color:#000;transform:scaleX(0.9454);font-weight:bold;">Массив1</span>
<span class="t" style="left:619.20px;top:563px;line-height:12px;font-size:11px;color:#000;transform:scaleX(1.0047);">Массив2</span>
<span class="t" style="left:619.20px;top:586px;line-height:12px;font-size:11px;color:#000;transform:scaleX(1.0047);">Массив3</span>
<span class="t" style="left:680.67px;top:540px;line-height:12px;font-size:11px;color:#111;transform:scaleX(0.9251);">I8:L8</span>
<span class="t" style="left:875.00px;top:540px;line-height:12px;font-size:11px;color:#000;transform:scaleX(0.9667);">=</span>
<span class="t" style="left:875.00px;top:563px;line-height:12px;font-size:11px;color:#000;transform:scaleX(0.9667);">=</span>
<span class="t" style="left:875.00px;top:586px;line-height:12px;font-size:11px;color:#000;transform:scaleX(0.9667);">=</span>
<span class="t" style="left:875.00px;top:659px;line-height:12px;font-size:11px;color:#000;transform:scaleX(0.9667);">=</span>
<span class="t" style="left:890.80px;top:540px;line-height:12px;font-size:11px;color:#000;transform:scaleX(0.9683);">{16;24;14;23}</span>
<span class="t" style="left:890.80px;top:563px;line-height:12px;font-size:11px;color:#9c9c9c;transform:scaleX(0.9574);font-weight:bold;">массив</span>
<span class="t" style="left:890.80px;top:586px;line-height:12px;font-size:11px;color:#9c9c9c;transform:scaleX(0.9574);font-weight:bold;">массив</span>
<span class="t" style="left:538.70px;top:675px;line-height:12px;font-size:11px;color:#000;transform:scaleX(1.0395);">Возвращает сумму произведений диапазонов или массивов.</span>
<span class="t" style="left:687.60px;top:699px;line-height:12px;font-size:11px;color:#000;transform:scaleX(0.9683);font-weight:bold;">Массив1:</span>
<span class="t" style="left:745.50px;top:699px;line-height:12px;font-size:11px;color:#000;transform:scaleX(1.0142);">массив1;массив2;... от 2 до 255 массивов, соответствующие</span>
<span class="t" style="left:745.50px;top:712px;line-height:12px;font-size:11px;color:#000;transform:scaleX(1.0665);">компоненты которых нужно сначала перемножить, а затем сложить</span>
<span class="t" style="left:745.50px;top:725px;line-height:12px;font-size:11px;color:#000;transform:scaleX(1.0488);">полученные произведения. Все массивы должны иметь одинаковую</span>
<span class="t" style="left:538.70px;top:762px;line-height:12px;font-size:11px;color:#000;transform:scaleX(1.0409);">Значение:</span>
<span class="t" style="left:538.70px;top:791px;line-height:12px;font-size:11px;color:#1a6fc4;transform:scaleX(1.0627);">Справка по этой функции</span>
<span class="t" style="left:989.50px;top:790px;line-height:12px;font-size:11px;color:#000;transform:scaleX(0.9450);">ОК</span>
<span class="t" style="left:1060.80px;top:790px;line-height:12px;font-size:11px;color:#000;transform:scaleX(0.9839);">Отмена</span>
<span class="t" style="left:1054.10px;top:486px;line-height:15px;font-size:13.5px;color:#000;transform:scaleX(0.8000);">?</span>
<span class="t" style="left:222.90px;top:168px;line-height:14px;font-size:12.4px;color:#35935f;transform:scaleX(1.8200);font-style:italic;font-family:'Liberation Serif',serif;-webkit-text-stroke:0.3px #35935f;">f</span>
<span class="t" style="left:229.18px;top:172px;line-height:10px;font-size:9.5px;color:#35935f;transform:scaleX(1.1833);font-weight:bold;font-style:italic;font-family:'Liberation Serif',serif;">x</span>
<span class="t" style="left:216.03px;top:402px;line-height:15px;font-size:13.5px;color:#000;transform:scaleX(0.9658);clip-path:inset(-3px -2px -3px 4.3px);">В( I8:L8;;)</span>
</div>
</body>
</html>
